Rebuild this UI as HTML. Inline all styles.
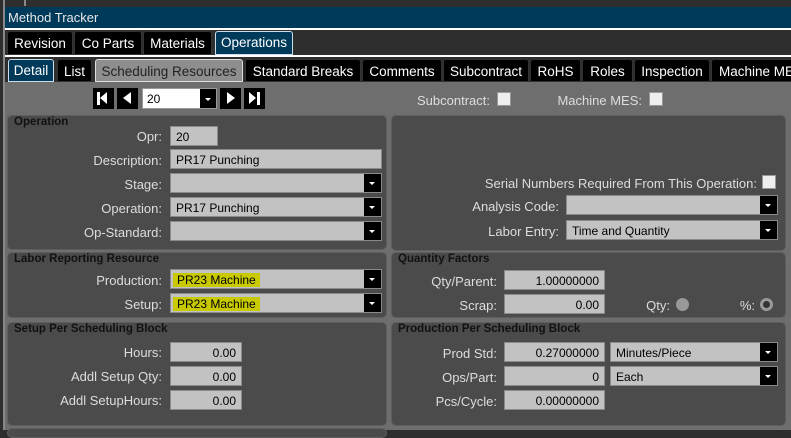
<!DOCTYPE html><html><head><style>
*{box-sizing:border-box}body{margin:0;width:791px;height:430px;overflow:hidden;background:#2e2e2e;font-family:"Liberation Sans",Arial,sans-serif;font-size:12.5px;color:#e0e0e0;position:relative}
.a{position:absolute}
.tab{position:absolute;background:#000;color:#fff;font-size:13.5px;text-align:center;border-radius:3px 3px 0 0;border:1px solid #333;padding-top:4px;white-space:nowrap;overflow:hidden}
.panel{position:absolute;background:#4b4b4b;border:1px solid #5e5e5e;border-radius:5px}
.ph{position:absolute;left:6px;top:0;font-weight:bold;font-size:11.5px;color:#111}
.lb{position:absolute;text-align:right;color:#ddd;font-size:13px}
.in{position:absolute;background:#c2c2c2;border:1px solid #8a8a8a;color:#000;font-size:12px;padding:3px 5px 0;height:20px;white-space:nowrap}
.r{text-align:right}
.dd:after{content:"";position:absolute;right:0;top:0;width:17px;height:18px;background:#000}
.dd:before{content:"";position:absolute;right:6px;top:8px;border:3px solid transparent;border-top:3px solid #fff;z-index:2}
.cb{position:absolute;width:14px;height:14px;background:#eee;border:1px solid #999}
.hl{background:#c9c900;padding:0 4px;margin-left:-3px}
.nb{position:absolute;top:88px;width:21px;height:21px;background:#000}
</style></head><body>
<div class="a" style="left:3px;top:0;width:2px;height:430px;background:#888"></div>
<div class="a" style="left:24px;top:0;width:2px;height:6px;background:#888"></div>
<div class="a" style="left:5px;top:7px;width:786px;height:21px;background:#003a5a;color:#e8e8e8;font-size:13px;padding:3px 3px">Method Tracker</div>
<div class="a" style="left:5px;top:28px;width:786px;height:2px;background:#fff"></div>
<div class="tab" style="left:7px;top:31px;width:66px;height:24px">Revision</div>
<div class="tab" style="left:74px;top:31px;width:68px;height:24px">Co Parts</div>
<div class="tab" style="left:143px;top:31px;width:69px;height:24px">Materials</div>
<div class="tab" style="left:215px;top:31px;width:78px;height:24px;background:#003a5a;border:1px solid #cde;padding-top:3px">Operations</div>
<div class="a" style="left:5px;top:55px;width:786px;height:2px;background:#fff"></div>
<div class="tab" style="left:8px;top:59px;width:46px;height:23px;background:#003a5a;border:1px solid #cde;padding-top:3px">Detail</div>
<div class="tab" style="left:57px;top:59px;width:35px;height:23px">List</div>
<div class="tab" style="left:95px;top:59px;width:148px;height:23px;background:#8e8e8e;color:#222;border:1px solid #ddd">Scheduling Resources</div>
<div class="tab" style="left:245px;top:59px;width:116px;height:23px">Standard Breaks</div>
<div class="tab" style="left:362px;top:59px;width:80px;height:23px">Comments</div>
<div class="tab" style="left:443px;top:59px;width:86px;height:23px">Subcontract</div>
<div class="tab" style="left:530px;top:59px;width:51px;height:23px">RoHS</div>
<div class="tab" style="left:582px;top:59px;width:51px;height:23px">Roles</div>
<div class="tab" style="left:634px;top:59px;width:76px;height:23px">Inspection</div>
<div class="tab" style="left:711px;top:59px;width:90px;height:23px;text-align:left;padding-left:7px">Machine MES</div>
<div class="a" style="left:5px;top:82px;width:786px;height:348px;background:#6e6e6e"></div>
<div class="nb" style="left:93px"><div class="a" style="left:4px;top:4px;width:3px;height:13px;background:#fff"></div><div class="a" style="left:7px;top:4px;border:6.5px solid transparent;border-right:7px solid #fff;border-left:0"></div></div>
<div class="nb" style="left:117px"><div class="a" style="left:6px;top:4px;border:6.5px solid transparent;border-right:8px solid #fff;border-left:0"></div></div>
<div class="a" style="left:142px;top:88px;width:75px;height:21px;background:#fff;border:1px solid #999;color:#000;font-size:12px;padding:3px 4px">20<div class="a" style="right:0;top:0;width:16px;height:19px;background:#000"></div><div class="a" style="right:5px;top:9px;border:3px solid transparent;border-top:3px solid #fff"></div></div>
<div class="nb" style="left:220px"><div class="a" style="left:7px;top:4px;border:6.5px solid transparent;border-left:8px solid #fff;border-right:0"></div></div>
<div class="nb" style="left:244px"><div class="a" style="left:5px;top:4px;border:6.5px solid transparent;border-left:7px solid #fff;border-right:0"></div><div class="a" style="left:13px;top:4px;width:3px;height:13px;background:#fff"></div></div>
<div class="lb" style="left:380px;width:110px;top:93px">Subcontract:</div><div class="cb" style="left:497px;top:92px"></div>
<div class="lb" style="left:530px;width:112px;top:93px">Machine MES:</div><div class="cb" style="left:649px;top:92px"></div>

<div class="panel" style="left:7px;top:115px;width:380px;height:135px"><div class="ph">Operation</div></div>
<div class="lb" style="left:40px;width:122px;top:129px">Opr:</div><div class="in" style="left:170px;top:126px;width:48px">20</div>
<div class="lb" style="left:40px;width:122px;top:153px">Description:</div><div class="in" style="left:170px;top:149px;width:212px">PR17 Punching</div>
<div class="lb" style="left:40px;width:122px;top:177px">Stage:</div><div class="in dd" style="left:170px;top:173px;width:212px"></div>
<div class="lb" style="left:40px;width:122px;top:201px">Operation:</div><div class="in dd" style="left:170px;top:197px;width:212px">PR17 Punching</div>
<div class="lb" style="left:40px;width:122px;top:225px">Op-Standard:</div><div class="in dd" style="left:170px;top:221px;width:212px"></div>

<div class="panel" style="left:7px;top:252px;width:380px;height:66px"><div class="ph">Labor Reporting Resource</div></div>
<div class="lb" style="left:40px;width:122px;top:273px">Production:</div><div class="in dd" style="left:170px;top:269px;width:212px"><span class="hl">PR23 Machine</span></div>
<div class="lb" style="left:40px;width:122px;top:297px">Setup:</div><div class="in dd" style="left:170px;top:293px;width:212px"><span class="hl">PR23 Machine</span></div>

<div class="panel" style="left:7px;top:322px;width:380px;height:104px"><div class="ph">Setup Per Scheduling Block</div></div>
<div class="lb" style="left:40px;width:122px;top:345px">Hours:</div><div class="in r" style="left:170px;top:342px;width:72px">0.00</div>
<div class="lb" style="left:40px;width:122px;top:369px">Addl Setup Qty:</div><div class="in r" style="left:170px;top:366px;width:72px">0.00</div>
<div class="lb" style="left:40px;width:122px;top:393px">Addl SetupHours:</div><div class="in r" style="left:170px;top:390px;width:72px">0.00</div>
<div class="panel" style="left:7px;top:428px;width:380px;height:10px"></div>

<div class="panel" style="left:391px;top:115px;width:395px;height:136px"></div>
<div class="lb" style="left:440px;width:317px;top:176px">Serial Numbers Required From This Operation:</div><div class="cb" style="left:762px;top:175px"></div>
<div class="lb" style="left:450px;width:109px;top:199px">Analysis Code:</div><div class="in dd" style="left:566px;top:195px;width:212px"></div>
<div class="lb" style="left:450px;width:109px;top:224px">Labor Entry:</div><div class="in dd" style="left:566px;top:220px;width:212px">Time and Quantity</div>

<div class="panel" style="left:391px;top:252px;width:395px;height:66px"><div class="ph">Quantity Factors</div></div>
<div class="lb" style="left:400px;width:97px;top:274px">Qty/Parent:</div><div class="in r" style="left:504px;top:270px;width:101px">1.00000000</div>
<div class="lb" style="left:400px;width:97px;top:298px">Scrap:</div><div class="in r" style="left:504px;top:294px;width:101px">0.00</div>
<div class="lb" style="left:620px;width:50px;top:298px">Qty:</div><div class="a" style="left:676px;top:298px;width:13px;height:13px;border-radius:50%;background:#999"></div>
<div class="lb" style="left:720px;width:35px;top:298px">%:</div><div class="a" style="left:760px;top:298px;width:13px;height:13px;border-radius:50%;border:3px solid #999;background:#333"></div>

<div class="panel" style="left:391px;top:322px;width:395px;height:104px"><div class="ph">Production Per Scheduling Block</div></div>
<div class="lb" style="left:400px;width:97px;top:346px">Prod Std:</div><div class="in r" style="left:504px;top:342px;width:101px">0.27000000</div><div class="in dd" style="left:610px;top:342px;width:168px">Minutes/Piece</div>
<div class="lb" style="left:400px;width:97px;top:370px">Ops/Part:</div><div class="in r" style="left:504px;top:366px;width:101px">0</div><div class="in dd" style="left:610px;top:366px;width:168px">Each</div>
<div class="lb" style="left:400px;width:97px;top:394px">Pcs/Cycle:</div><div class="in r" style="left:504px;top:390px;width:101px">0.00000000</div>
</body></html>
